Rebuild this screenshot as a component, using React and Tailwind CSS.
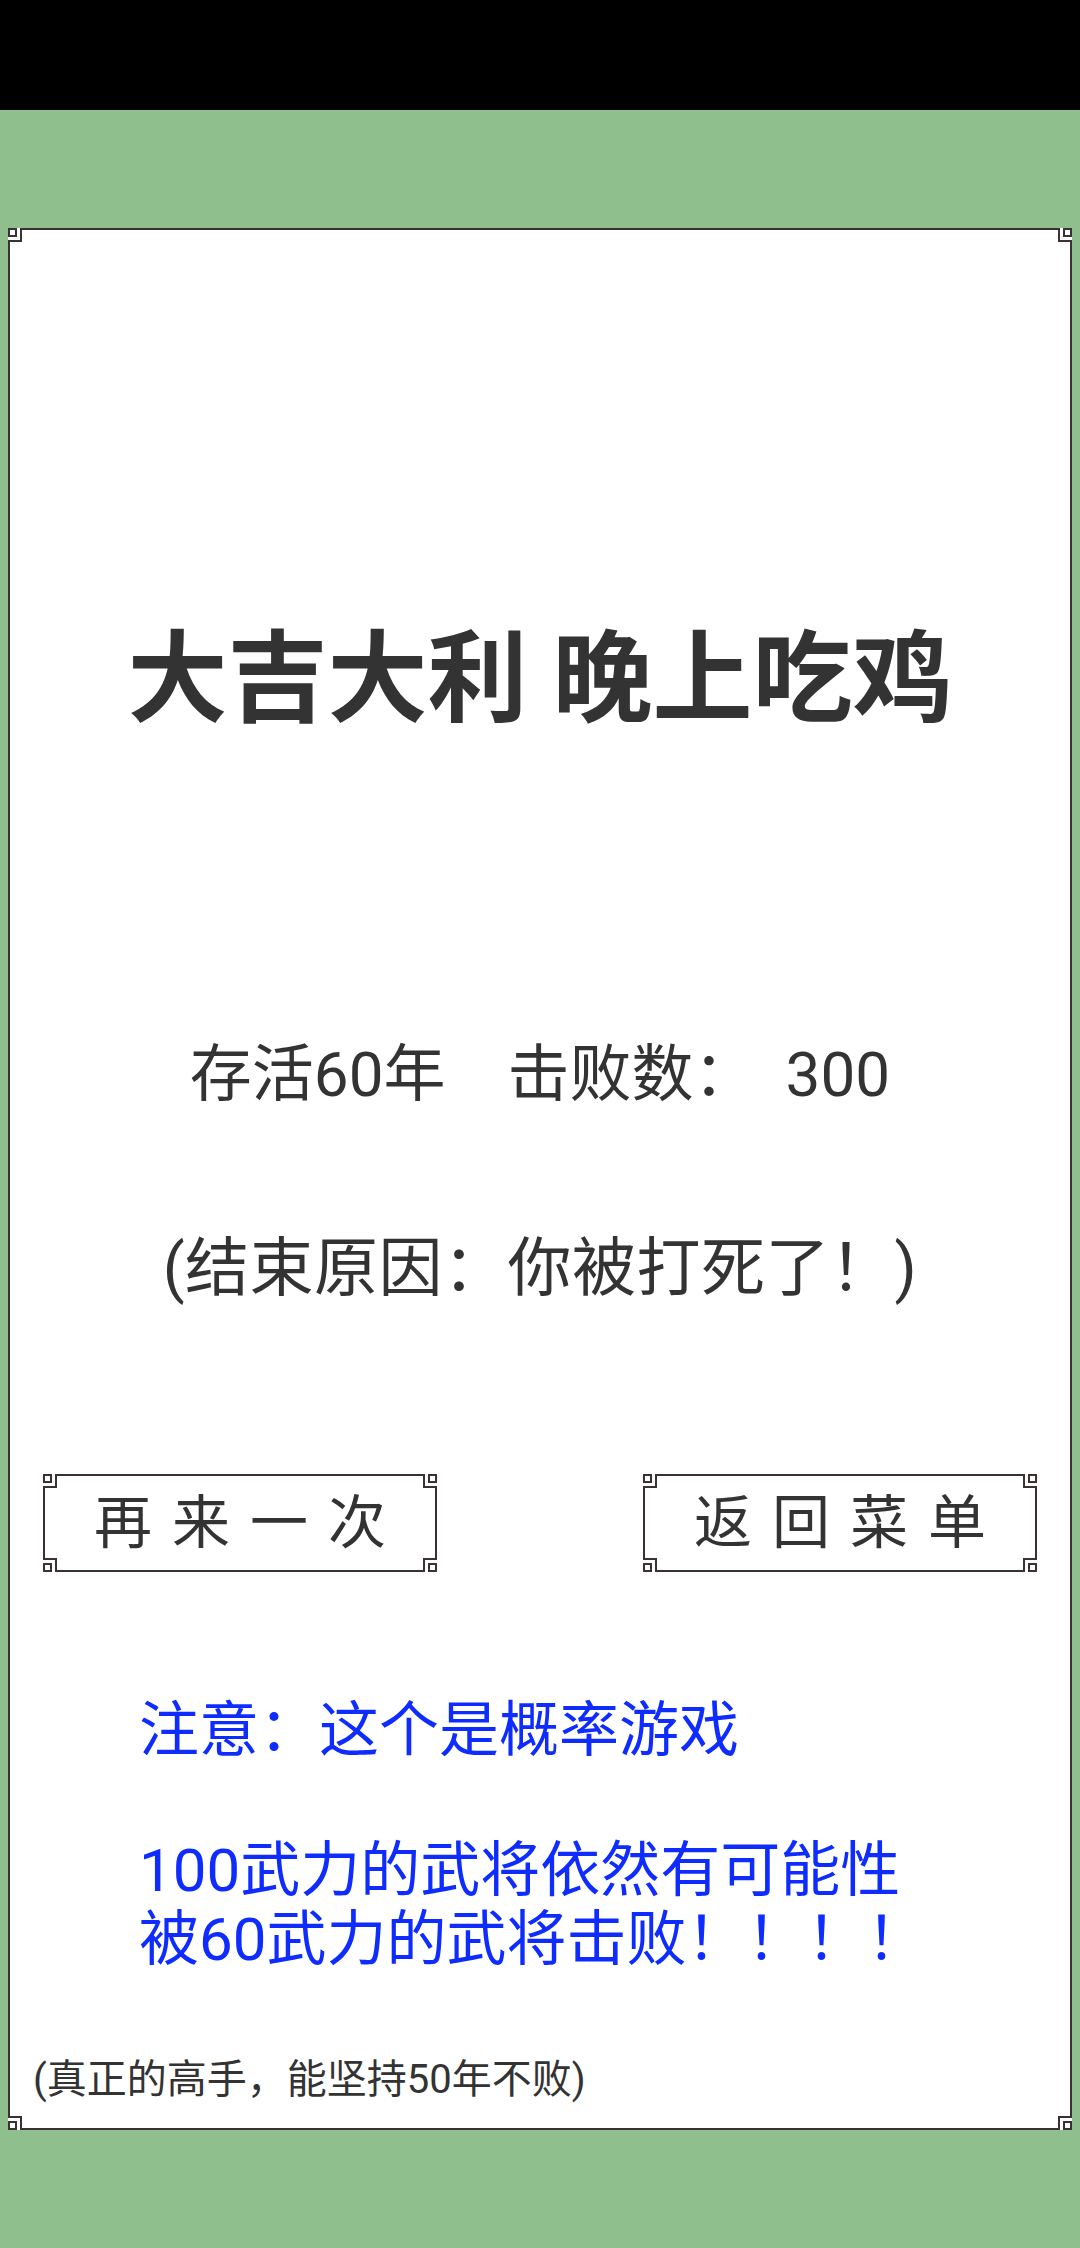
import React from 'react';

// notched corner with the little square, drawn for the top-left and rotated for the others
const Corner = ({ className }) => (
  <svg viewBox="0 0 14 14" className={"absolute w-[14px] h-[14px] " + className}>
    <rect x="0" y="0" width="12" height="12" fill="#fff" />
    <path d="M13 0V13H0" fill="none" stroke="#3a3232" strokeWidth="2" />
    <rect x="1" y="1" width="7" height="7" fill="#fff" stroke="#3a3232" strokeWidth="2" />
  </svg>
);

const Frame = ({ className, children }) => (
  <div className={"relative border-2 border-[#3a3232] bg-white " + className}>
    <Corner className="-top-[2px] -left-[2px]" />
    <Corner className="-top-[2px] -right-[2px] rotate-90" />
    <Corner className="-bottom-[2px] -left-[2px] -rotate-90" />
    <Corner className="-bottom-[2px] -right-[2px] rotate-180" />
    {children}
  </div>
);

const MenuButton = ({ label }) => (
  <Frame className="w-[394px] h-[98px] flex items-center justify-center">
    <span className="text-[58px] leading-none tracking-[20px] pl-[20px]">{label}</span>
  </Frame>
);

export default function App() {
  return (
    <div className="w-[1080px] h-[2248px] bg-[#8fbf8c] flex flex-col text-[#333] font-[family-name:Roboto,'Noto_Sans_CJK_SC',sans-serif]">
      <div className="h-[110px] bg-black shrink-0" />
      <div className="flex-1 flex px-[8px] py-[118px]">
        <Frame className="flex-1 flex flex-col">
          <h1 className="mt-[400px] text-center text-[100px] leading-[100px] font-bold">大吉大利 晚上吃鸡</h1>

          <div className="mt-[315px] flex justify-center text-[62px] leading-[60px]">
            <span>存活60年</span>
            <span className="ml-[62px]">击败数：</span>
            <span className="ml-[30px]">300</span>
          </div>

          <div className="mt-[134px] text-center text-[64px] leading-[60px] tracking-[0.5px]">(结束原因：你被打死了！)</div>

          <div className="mt-[175px] flex justify-between px-[33px]">
            <MenuButton label="再来一次" />
            <MenuButton label="返回菜单" />
          </div>

          <div className="mt-[129px] pl-[129px] text-[60px] leading-[60px] text-[#0f2cff]">注意：这个是概率游戏</div>

          <div className="mt-[75px] pl-[129px] text-[60px] leading-[69px] text-[#0f2cff]">
            <p>100武力的武将依然有可能性</p>
            <p>被60武力的武将击败！！！！</p>
          </div>

          <div className="mt-[86px] pl-[23px] text-[40px] leading-[40px]">(真正的高手，能坚持50年不败)</div>
        </Frame>
      </div>
    </div>
  );
}
